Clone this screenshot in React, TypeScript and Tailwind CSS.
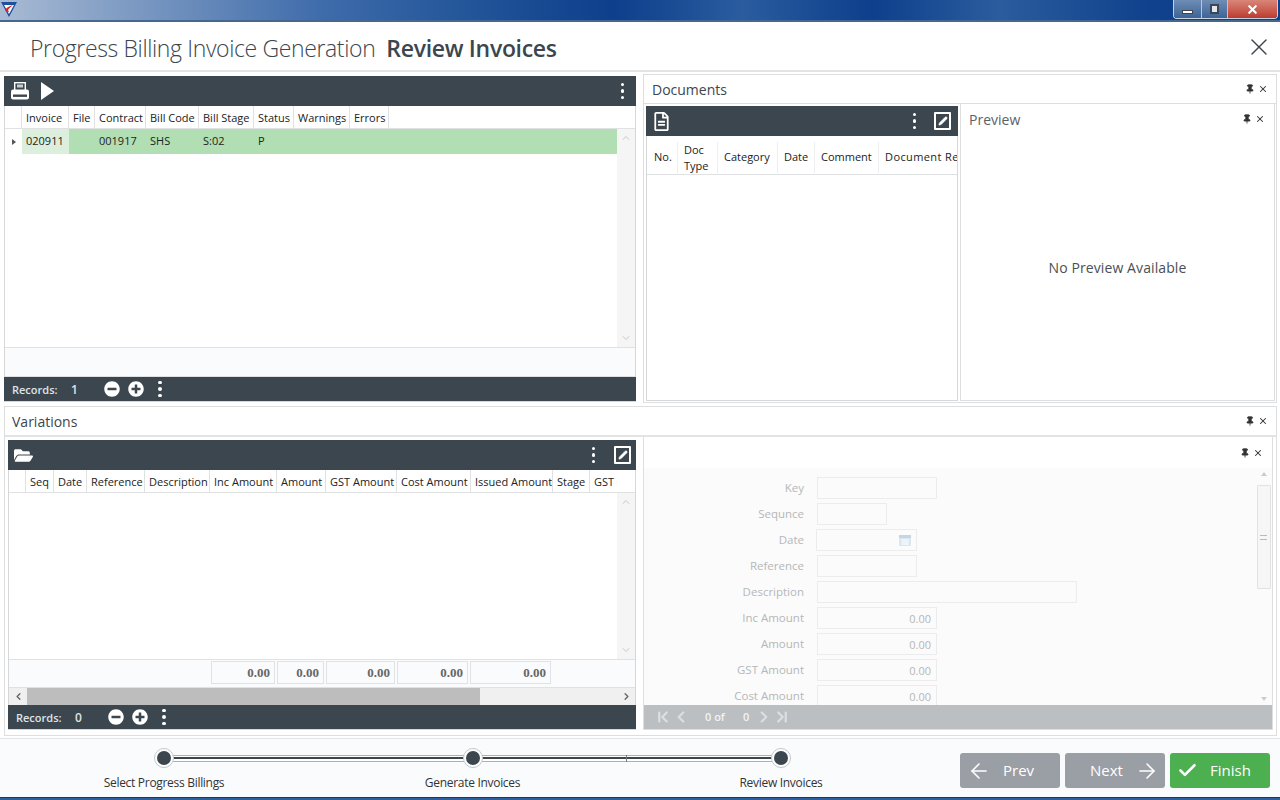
import React from 'react';
import { ArrowLeft, ArrowRight, Check, ChevronFirst, ChevronLast, ChevronLeft, ChevronRight, ChevronUp, ChevronDown, X, Pencil, Pin } from 'lucide-react';
import { FaFolderOpen, FaMinusCircle, FaPlusCircle, FaRegFileAlt } from 'react-icons/fa';

type Col = { label: string; w: number };

const INVOICE_COLS: Col[] = [
    { label: 'Invoice', w: 47 },
    { label: 'File', w: 26 },
    { label: 'Contract', w: 51 },
    { label: 'Bill Code', w: 53 },
    { label: 'Bill Stage', w: 55 },
    { label: 'Status', w: 40 },
    { label: 'Warnings', w: 56 },
    { label: 'Errors', w: 39 },
];

const VARIATION_COLS: Col[] = [
    { label: 'Seq', w: 28 },
    { label: 'Date', w: 33 },
    { label: 'Reference', w: 58 },
    { label: 'Description', w: 65 },
    { label: 'Inc Amount', w: 67 },
    { label: 'Amount', w: 49 },
    { label: 'GST Amount', w: 71 },
    { label: 'Cost Amount', w: 74 },
    { label: 'Issued Amount', w: 82 },
    { label: 'Stage', w: 37 },
    { label: 'GST Code', w: 60 },
];

const TOTALS = [64, 47, 69, 71, 81];

const FORM_ROWS = [
    { label: 'Key', w: 'w-[120px] ml-[12px]', value: '' },
    { label: 'Sequnce', w: 'w-[70px] ml-[12px]', value: '' },
    { label: 'Date', w: 'w-[101px] ml-[11px]', value: '', date: true },
    { label: 'Reference', w: 'w-[100px] ml-[12px]', value: '' },
    { label: 'Description', w: 'w-[260px] ml-[12px]', value: '' },
    { label: 'Inc Amount', w: 'w-[120px] ml-[12px]', value: '0.00' },
    { label: 'Amount', w: 'w-[120px] ml-[12px]', value: '0.00' },
    { label: 'GST Amount', w: 'w-[120px] ml-[12px]', value: '0.00' },
    { label: 'Cost Amount', w: 'w-[120px] ml-[12px]', value: '0.00' },
];

function Dots() {
    return (
        <div className="flex flex-col gap-[3px]">
            <span className="w-[3.5px] h-[3.5px] rounded-full bg-white" />
            <span className="w-[3.5px] h-[3.5px] rounded-full bg-white" />
            <span className="w-[3.5px] h-[3.5px] rounded-full bg-white" />
        </div>
    );
}

function EditBox() {
    return (
        <div className="w-[17px] h-[18px] border-2 border-white rounded-[1px] flex items-center justify-center">
            <Pencil className="w-[10px] h-[10px] text-white fill-white" strokeWidth={1.5} />
        </div>
    );
}

function PinClose({ className = '' }: { className?: string }) {
    return (
        <div className={`flex items-center gap-[3px] text-[#333] ${className}`}>
            <Pin className="w-[10px] h-[10px] fill-[#333]" strokeWidth={2} />
            <X className="w-[10px] h-[10px]" strokeWidth={2.5} />
        </div>
    );
}

function HeaderCell({ col }: { col: Col }) {
    return (
        <div
            className="shrink-0 h-full flex items-center pt-[3px] px-[4px] border-r border-[#dfe1e3] whitespace-nowrap overflow-hidden"
            style={{ width: col.w }}
        >
            {col.label}
        </div>
    );
}

function RecordsBar({ count }: { count: string }) {
    return (
        <div className="h-[24px] shrink-0 -mx-[1px] bg-[#3c464e] flex items-center text-[11px] text-[#dfe4e8] font-semibold">
            <span className="ml-[8px] mt-[2px] w-[59px]">Records:</span>
            <span className="w-[33px] mt-[2px] text-[12px]">{count}</span>
            <FaMinusCircle className="w-[16px] h-[16px] text-white" />
            <FaPlusCircle className="w-[16px] h-[16px] text-white ml-[8px]" />
            <div className="ml-[14px]"><Dots /></div>
        </div>
    );
}

function WindowButtons() {
    return (
        <div className="flex h-[19px] w-[105px] border border-t-0 border-[#c6d2e2] rounded-b-[4px] overflow-hidden">
            <div className="w-[28px] bg-gradient-to-b from-[#6f8db4] to-[#3c6498] flex items-center justify-center border-r border-[#b6c6da]">
                <span className="w-[11px] h-[4px] mt-[5px] bg-white border border-[#444]" />
            </div>
            <div className="w-[26px] bg-gradient-to-b from-[#6f8db4] to-[#3c6498] flex items-center justify-center border-r border-[#b6c6da]">
                <span className="w-[9px] h-[10px] bg-[#dfe6ef] border-2 border-[#3a4654]" />
            </div>
            <div className="flex-1 bg-gradient-to-b from-[#d98579] to-[#bb3a2e] flex items-center justify-center">
                <X className="w-[13px] h-[13px] text-white" strokeWidth={4} />
            </div>
        </div>
    );
}

function Logo() {
    return (
        <svg viewBox="0 0 16 15" className="w-[16px] h-[15px] ml-[1px] mt-[2px]">
            <path d="M0 0h16L8 15z" fill="#1d4f9c" />
            <path d="M3 3h10L8 12z" fill="#fff" />
            <path d="M4 8c2-3 5-4 8-5-2 2-4 3-5 5l1 2c-2 0-3-1-4-2z" fill="#d8232a" />
        </svg>
    );
}

function PrinterIcon() {
    return (
        <svg viewBox="0 0 20 20" className="w-[20px] h-[20px]">
            <rect x="4.7" y="1.7" width="10.6" height="8" fill="none" stroke="#fff" strokeWidth="1.4" />
            <rect x="7" y="3.5" width="6" height="3" fill="#c9ced2" />
            <rect x="1" y="8.5" width="18" height="10" rx="2" fill="#fff" />
            <rect x="3" y="13.5" width="14" height="2.4" fill="#3c464e" />
        </svg>
    );
}

function Step() {
    return (
        <div className="w-[20px] h-[20px] shrink-0 rounded-full bg-white border border-[#c4c8cb] flex items-center justify-center z-10">
            <span className="w-[14px] h-[14px] rounded-full bg-[#3c464e]" />
        </div>
    );
}

function Track() {
    return (
        <div className="flex-1 h-[7px] -mx-[1px] bg-white border-y border-[#aab0b5] flex items-center">
            <span className="w-full h-[2px] bg-[#3c464e]" />
        </div>
    );
}

export default function App() {
    return (
        <div
            className="w-[1280px] h-[800px] overflow-hidden flex flex-col bg-white text-[#222] text-[11px]"
            style={{ fontFamily: '"Open Sans", "Noto Sans", sans-serif' }}
        >
            {/* Window title bar */}
            <div className="h-[22px] shrink-0 flex justify-between border-b-2 border-[#46688f] bg-[linear-gradient(90deg,#a9bbd4_0%,#86a1c6_8%,#3f6cab_25%,#1f5297_38%,#0d3f8c_48%,#2a5c9f_58%,#0d3f8c_68%,#2b5c9e_78%,#0f418c_90%,#0d3f8c_100%)]">
                <Logo />
                <div className="mr-[2px]"><WindowButtons /></div>
            </div>

            {/* Wizard header */}
            <div className="h-[50px] shrink-0 flex items-center justify-between pt-[5px] pl-[30px] pr-[7px] border-b-2 border-[#e2e3e4]">
                <div className="flex items-baseline gap-[11px] text-[#3c464e]">
                    <span className="text-[23px] font-light tracking-[-0.37px]">Progress Billing Invoice Generation</span>
                    <span className="text-[23px] font-semibold tracking-[-0.3px]">Review Invoices</span>
                </div>
                <X className="w-[28px] h-[28px] -mt-[3px] text-[#3c464e]" strokeWidth={1.2} />
            </div>

            {/* Upper row */}
            <div className="h-[333px] shrink-0 flex">
                {/* Invoices grid */}
                <div className="ml-[4px] mt-[4px] mb-[3px] w-[632px] flex flex-col border-x border-b border-[#d5d7d9]">
                    <div className="h-[30px] shrink-0 -mx-[1px] bg-[#3c464e] flex items-center text-white pl-[6px] pr-[12px]">
                        <PrinterIcon />
                        <svg viewBox="0 0 13 18" className="w-[13px] h-[18px] ml-[11px]">
                            <path d="M0 0l13 9L0 18z" fill="#fff" />
                        </svg>
                        <div className="ml-auto"><Dots /></div>
                    </div>
                    <div className="h-[23px] shrink-0 flex border-b border-[#dfe1e3]">
                        <div className="w-[17px] shrink-0 border-r border-[#dfe1e3]" />
                        {INVOICE_COLS.map(c => <HeaderCell key={c.label} col={c} />)}
                    </div>
                    <div className="flex-1 flex min-h-0">
                        <div className="flex-1 flex flex-col">
                            <div className="h-[25px] shrink-0 flex items-center bg-[#b2deb4]">
                                <div className="w-[17px] h-full bg-white flex items-center justify-center">
                                    <span className="w-0 h-0 border-y-[3.5px] border-y-transparent border-l-[4px] border-l-[#555]" />
                                </div>
                                <div className="w-[47px] h-full flex items-center px-[4px] bg-[#dcefdc]">020911</div>
                                <div className="w-[26px]" />
                                <div className="w-[51px] px-[4px]">001917</div>
                                <div className="w-[53px] px-[4px]">SHS</div>
                                <div className="w-[55px] px-[4px]">S:02</div>
                                <div className="w-[40px] px-[4px]">P</div>
                            </div>
                        </div>
                        <div className="w-[18px] shrink-0 bg-[#f5f5f5] flex flex-col items-center justify-between py-[3px] text-[#c8c8c8]">
                            <ChevronUp className="w-[12px] h-[12px]" strokeWidth={2} />
                            <ChevronDown className="w-[12px] h-[12px]" strokeWidth={2} />
                        </div>
                    </div>
                    <div className="h-[30px] shrink-0 bg-[#fafbfd] border-y border-[#dfe1e3]" />
                    <RecordsBar count="1" />
                </div>

                {/* Documents */}
                <div className="ml-[7px] mt-[2px] mb-[2px] w-[634px] flex flex-col border border-[#dcdee0]">
                    <div className="h-[29px] shrink-0 flex items-center justify-between pl-[8px] pr-[8px] border-b border-[#dcdee0]">
                        <span className="text-[14px] text-[#3c464e]">Documents</span>
                        <PinClose />
                    </div>
                    <div className="flex-1 flex min-h-0">
                        <div className="ml-[2px] mt-[2px] mb-[1px] w-[312px] flex flex-col border-x border-b border-[#d5d7d9]">
                            <div className="h-[30px] shrink-0 -mx-[1px] bg-[#3c464e] flex items-center text-white pl-[7px] pr-[7px]">
                                <FaRegFileAlt className="w-[17px] h-[19px]" />
                                <div className="ml-auto mr-[18px]"><Dots /></div>
                                <EditBox />
                            </div>
                            <div className="h-[39px] shrink-0 flex items-stretch border-b border-[#dfe1e3] pt-[6px] pb-[1px] pl-[2px] overflow-hidden">
                                <div className="w-[29px] shrink-0 flex items-center px-[5px] border-r border-[#eceef0]">No.</div>
                                <div className="w-[40px] shrink-0 flex items-center px-[6px] leading-[16px] border-r border-[#eceef0]">Doc Type</div>
                                <div className="w-[60px] shrink-0 flex items-center px-[6px] border-r border-[#eceef0]">Category</div>
                                <div className="w-[37px] shrink-0 flex items-center px-[6px] border-r border-[#eceef0]">Date</div>
                                <div className="w-[64px] shrink-0 flex items-center px-[6px] border-r border-[#eceef0]">Comment</div>
                                <div className="w-[90px] shrink-0 flex items-center px-[6px] whitespace-nowrap overflow-hidden tracking-[0.4px]">Document Ref</div>
                            </div>
                        </div>
                        <div className="ml-[2px] mr-[1px] mb-[1px] flex-1 flex flex-col border-x border-b border-[#dcdee0]">
                            <div className="h-[30px] shrink-0 flex items-center justify-between pl-[8px] pr-[9px]">
                                <span className="text-[14px] text-[#5a6269]">Preview</span>
                                <PinClose />
                            </div>
                            <div className="flex-1 flex items-center justify-center text-[14px] tracking-[0.1px] text-[#4a4f55]">
                                No Preview Available
                            </div>
                        </div>
                    </div>
                </div>
            </div>

            {/* Variations */}
            <div className="h-[330px] w-[1273px] shrink-0 ml-[4px] mt-[1px] flex flex-col border border-[#dcdee0]">
                <div className="h-[30px] shrink-0 flex items-center justify-between pl-[7px] pr-[4px] border-b-2 border-[#e2e3e4]">
                    <span className="text-[14px] text-[#3c464e]">Variations</span>
                    <div className="mr-[4px]"><PinClose /></div>
                </div>
                <div className="flex-1 flex min-h-0">
                    {/* Variations grid */}
                    <div className="ml-[3px] mt-[3px] mb-[5px] w-[628px] flex flex-col border-x border-b border-[#d5d7d9]">
                        <div className="h-[30px] shrink-0 -mx-[1px] bg-[#3c464e] flex items-center text-white pl-[6px] pr-[5px]">
                            <FaFolderOpen className="w-[19px] h-[17px]" />
                            <div className="ml-auto mr-[19px]"><Dots /></div>
                            <EditBox />
                        </div>
                        <div className="h-[23px] shrink-0 flex border-b border-[#dfe1e3]">
                            <div className="flex-1 min-w-0 flex overflow-hidden">
                                <div className="w-[17px] shrink-0 border-r border-[#dfe1e3]" />
                                {VARIATION_COLS.map(c => <HeaderCell key={c.label} col={c} />)}
                            </div>
                            <div className="w-[18px] shrink-0 bg-white" />
                        </div>
                        <div className="flex-1 flex min-h-0 justify-end">
                            <div className="w-[18px] shrink-0 bg-[#f5f5f5] flex flex-col items-center justify-between py-[3px] text-[#c8c8c8]">
                                <ChevronUp className="w-[12px] h-[12px]" strokeWidth={2} />
                                <ChevronDown className="w-[12px] h-[12px]" strokeWidth={2} />
                            </div>
                        </div>
                        <div className="h-[29px] shrink-0 flex items-center gap-[2px] pb-[2px] pl-[202px] bg-[#fafbfd] border-y border-[#dfe1e3]">
                            {TOTALS.map((w, i) => (
                                <div
                                    key={i}
                                    className="h-[23px] border border-[#e0e3e6] flex items-center justify-end pr-[4px] text-[13px] font-bold text-[#666]"
                                    style={{ width: w, fontFamily: '"Liberation Serif", serif' }}
                                >
                                    0.00
                                </div>
                            ))}
                        </div>
                        <div className="h-[17px] shrink-0 flex items-center bg-[#f0f0f0]">
                            <div className="w-[18px] flex justify-center text-[#666]"><ChevronLeft className="w-[11px] h-[11px]" strokeWidth={3} /></div>
                            <div className="w-[453px] h-full bg-[#bdbdbd]" />
                            <div className="flex-1 flex justify-end pr-[3px] text-[#666]"><ChevronRight className="w-[11px] h-[11px]" strokeWidth={3} /></div>
                        </div>
                        <RecordsBar count="0" />
                    </div>

                    {/* Variation detail */}
                    <div className="ml-[7px] mb-[5px] w-[630px] flex flex-col border-x border-b border-[#dcdee0]">
                        <div className="h-[31px] shrink-0 flex items-center justify-end pr-[9px] bg-white">
                            <PinClose />
                        </div>
                        <div className="flex-1 flex min-h-0 bg-[#fbfbfb]">
                            <div className="flex-1 overflow-hidden pt-[9px] flex flex-col gap-[4px]">
                                {FORM_ROWS.map(r => (
                                    <div key={r.label} className="h-[22px] shrink-0 flex items-center">
                                        <span className="w-[161px] shrink-0 pr-[1px] text-right text-[11.5px] text-[#b5b7b9]">{r.label}</span>
                                        <div className={`${r.w} h-full shrink-0 border border-[#ececec] flex items-center justify-end pt-[2px] pr-[5px] text-[11px] text-[#b5b7b9]`}>
                                            {r.value}
                                            {r.date && (
                                                <svg viewBox="0 0 12 12" className="w-[12px] h-[12px] -mt-[2px]">
                                                    <rect x="0" y="1" width="12" height="11" fill="#dce8f0" />
                                                    <rect x="0" y="1" width="12" height="3" fill="#c3d6e3" />
                                                    <path d="M2 6h8M2 8h8M2 10h8M4 5v6M6 5v6M8 5v6" stroke="#fff" strokeWidth="0.6" />
                                                </svg>
                                            )}
                                        </div>
                                    </div>
                                ))}
                            </div>
                            <div className="w-[17px] shrink-0 flex flex-col items-center py-[4px]">
                                <span className="w-0 h-0 shrink-0 border-x-[3px] border-x-transparent border-b-[4px] border-b-[#ccc]" />
                                <div className="w-[14px] h-[104px] shrink-0 mt-[9px] border border-[#e2e2e2] rounded-[1px] bg-[#f6f6f6] flex items-center justify-center">
                                    <span className="w-[7px] h-[5px] border-y border-[#bbb]" />
                                </div>
                                <span className="w-0 h-0 shrink-0 mt-auto border-x-[3px] border-x-transparent border-t-[4px] border-t-[#ccc]" />
                            </div>
                        </div>
                        <div className="h-[24px] shrink-0 bg-[#bcbfc2] flex items-center text-[#f2f3f4] text-[11px] font-semibold pl-[10px]">
                            <ChevronFirst className="w-[18px] h-[18px] text-[#dcdee0]" strokeWidth={3} />
                            <ChevronLeft className="w-[18px] h-[18px] text-[#dcdee0]" strokeWidth={3} />
                            <span className="ml-[15px] w-[38px]">0 of</span>
                            <span className="w-[12px]">0</span>
                            <ChevronRight className="w-[18px] h-[18px] text-[#dcdee0]" strokeWidth={3} />
                            <ChevronLast className="w-[18px] h-[18px] text-[#dcdee0]" strokeWidth={3} />
                        </div>
                    </div>
                </div>
            </div>

            {/* Wizard footer */}
            <div className="flex-1 bg-[#fafbfd] mt-[2px] flex border-t border-[#e2e3e4]">
                <div className="ml-[153px] w-[639px] pt-[9px] flex flex-col">
                    <div className="mx-[1px] flex items-center">
                        <Step />
                        <Track />
                        <Step />
                        <Track />
                        <span className="w-px h-[7px] -ml-[145px] mr-[144px] bg-[#777] z-10" />
                        <Step />
                    </div>
                    <div className="mt-[6px] flex justify-between px-[11px] text-[12px] text-[#333]">
                        {['Select Progress Billings', 'Generate Invoices', 'Review Invoices'].map(label => (
                            <div key={label} className="w-0 flex justify-center whitespace-nowrap tracking-[-0.3px]">{label}</div>
                        ))}
                    </div>
                </div>
                <div className="ml-[168px] pt-[14px] flex gap-[5px] text-[15px] text-white font-medium">
                    <div className="w-[100px] h-[35px] rounded-[3px] bg-[#9a9ea5] flex items-center pl-[7px]">
                        <ArrowLeft className="w-[24px] h-[24px]" strokeWidth={1.6} />
                        <span className="ml-[12px]">Prev</span>
                    </div>
                    <div className="w-[100px] h-[35px] rounded-[3px] bg-[#9a9ea5] flex items-center pl-[25px]">
                        <span>Next</span>
                        <ArrowRight className="w-[24px] h-[24px] ml-[12px]" strokeWidth={1.6} />
                    </div>
                    <div className="w-[100px] h-[35px] rounded-[3px] bg-[#4caf50] flex items-center pl-[7px]">
                        <Check className="w-[21px] h-[21px]" strokeWidth={3} />
                        <span className="ml-[12px]">Finish</span>
                    </div>
                </div>
            </div>
            <div className="h-[3px] shrink-0 bg-[#2f5f9e] border-t border-[#26364d]" />
        </div>
    );
}
